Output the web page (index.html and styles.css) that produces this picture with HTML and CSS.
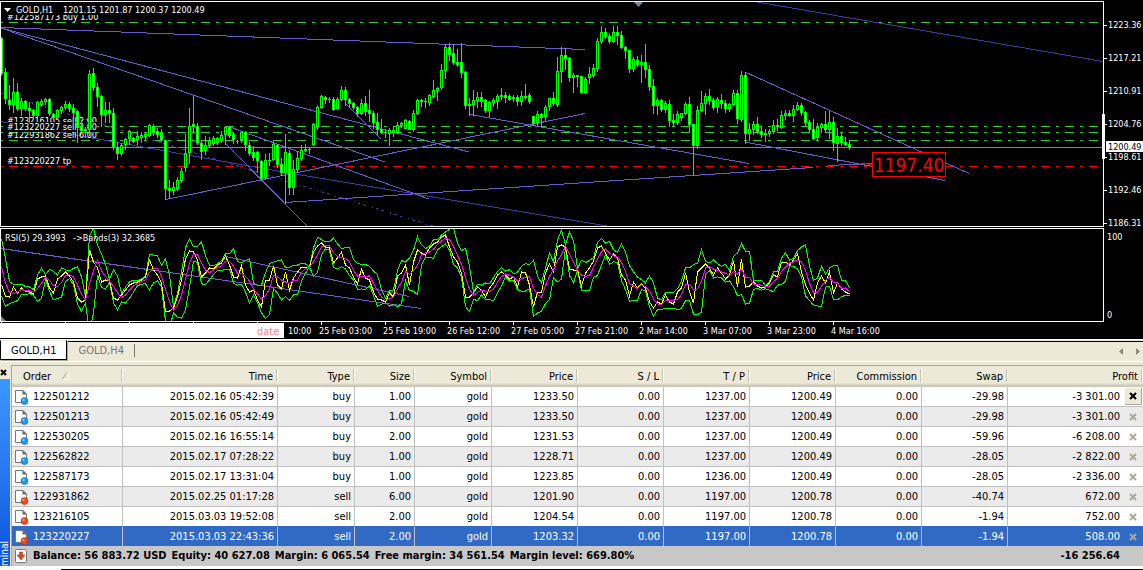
FILE: index.html
```
<!DOCTYPE html>
<html lang="en">
<head>
  <meta charset="UTF-8">
  <title>GOLD,H1</title>
  <link rel="stylesheet" href="styles.css">
</head>
<body>
  <svg class="chart" viewBox="0 0 1143 339" role="img" aria-label="GOLD,H1 chart">
    <defs>
      <clipPath id="pricePane"><rect x="1" y="2" width="1102" height="224"/></clipPath>
      <clipPath id="rsiPane"><rect x="1" y="229" width="1102" height="92"/></clipPath>
    </defs>

    <!-- order levels -->
    <g class="levels">
      <path class="level" d="M1 22.5H1103M1 126.5H1103M1 132.5H1103M1 140.5H1103"/>
      <path class="level tp" d="M1 166.5H1103"/>
    </g>
    <path class="bid" d="M1 147.5H1103"/>

    <!-- trend lines -->
    <g class="trend" clip-path="url(#pricePane)">
      <path class="dark" d="M0 121.5L280 171.5L613 227M757 2L1103 61.5"/>
      <path class="dark dots" d="M0 93L436 227"/>
      <path d="M1 27.5L585 49.5M1 28L469 152M1 28L385 162M230 127L429 199"/>
      <path d="M226 144L308 227M345 103L381 139"/>
      <path d="M166 199.5L585 113.5M285 202.5L813 167.5M828 165.5L872 163.5"/>
      <path d="M470 114.5L749 163.5M745 72L969 173.5M745 142L945 180.5"/>
    </g>

    <g class="label">
      <text x="7" y="20">#122587173 buy 1.00</text>
      <rect class="cover" x="1" y="2" width="220" height="13"/>
      <text x="7" y="124">#123216105 sell 2.00</text>
      <text x="7" y="138">#122931862 sell 6.00</text>
      <rect class="cover" x="7" y="122" width="90" height="10"/>
      <text x="7" y="130">#123220227 sell 2.00</text>
      <text x="7" y="164">#123220227 tp</text>
      <path d="M4 8H11L7.500 12Z"/>
      <text x="16" y="13">GOLD,H1</text>
      <text x="63" y="13">1201.15 1201.87 1200.37 1200.49</text>
    </g>

    <g id="candles" clip-path="url(#pricePane)"></g>
    <path class="shift" d="M634 2H643L638.500 7Z"/>

    <path class="pointer" d="M862 163L872 165"/>
    <rect class="price-box" x="872.500" y="152.500" width="73" height="24"/>
    <text class="price-text" x="909" y="172">1197.40</text>

    <!-- RSI pane -->
    <g class="trend" clip-path="url(#rsiPane)">
      <path d="M1 248.500L421 308.500M226 256.500L409 296.500"/>
    </g>
    <g class="rsi" clip-path="url(#rsiPane)">
      <polyline id="upper" class="band"/>
      <polyline id="lower" class="band"/>
      <polyline id="rsi" class="value"/>
      <polyline id="middle" class="middle"/>
    </g>
    <path class="shift" d="M1 316V321H6Z"/>
    <g class="label">
      <text x="5" y="241">RSI(5) 29.3993</text>
      <text x="73" y="241">-&gt;Bands(3) 32.3685</text>
    </g>

    <!-- frames and axes -->
    <path class="frame" d="M0.500 1.500H1103.500V226.500H0.500ZM0.500 228.500H1103.500V321.500H0.500Z"/>
    <rect class="range" x="1102" y="114" width="3" height="45"/>
    <rect class="range" x="1106" y="141" width="37" height="11"/>
    <path id="ticks" class="frame"/>
    <g id="prices" class="label"></g>
    <text class="label current" x="1108" y="150">1200.49</text>
    <g class="label">
      <text x="1107" y="240">100</text>
      <text x="1107" y="318">0</text>
    </g>
    <g id="times" class="label"></g>
    <rect class="range" x="0" y="323" width="284" height="15"/>
    <text class="date" x="257" y="335">date</text>
  </svg>

  <nav class="tabs">
    <a class="tab active" href="#h1">GOLD,H1</a>
    <a class="tab" href="#h4">GOLD,H4</a>
    <span class="tab-end"></span>
    <button class="scroll" aria-label="Scroll left"><svg width="4" height="7"><path d="M4 0V7L0 3.500Z"/></svg></button>
    <button class="scroll" aria-label="Scroll right"><svg width="4" height="7"><path d="M0 0V7L4 3.500Z"/></svg></button>
  </nav>

  <div class="terminal">
    <div class="side">
      <button class="close" aria-label="Close">
        <svg width="7" height="7" viewBox="0 0 7 7"><path d="M1 1L6 6M6 1L1 6"/></svg>
      </button>
      <div class="caption">minal</div>
    </div>
    <table>
      <colgroup>
        <col class="w-order"><col class="w-time"><col class="w-type"><col class="w-size"><col class="w-symbol">
        <col class="w-num"><col class="w-num"><col class="w-num"><col class="w-num"><col class="w-num"><col class="w-num">
        <col><col class="w-close">
      </colgroup>
      <thead>
        <tr>
          <th class="order">Order <svg class="sort" width="9" height="8" viewBox="0 0 9 8"><path class="lo" d="M0 7.500H8L5 1"/><path class="hi" d="M0.500 7.500L4.500 0.500"/></svg></th>
          <th>Time</th>
          <th>Type</th>
          <th>Size</th>
          <th>Symbol</th>
          <th>Price</th>
          <th>S / L</th>
          <th>T / P</th>
          <th>Price</th>
          <th>Commission</th>
          <th>Swap</th>
          <th colspan="2">Profit</th>
        </tr>
      </thead>
      <tbody id="orders"></tbody>
      <tfoot>
        <tr>
          <td colspan="11" class="order">
            <svg class="doc" width="14" height="16" viewBox="0 0 14 16">
              <rect x="1.500" y="1.500" width="11" height="13" rx="1" fill="#fff" stroke="#777"/>
              <path d="M5.500 4H8.500V7H11L7 12L3 7H5.500Z" fill="#e04818" stroke="#a03010" stroke-width="0.500"/>
            </svg><span class="balance"><span>Balance: 56 883.72 USD</span> <span>Equity: 40 627.08</span> <span>Margin: 6 065.54</span> <span>Free margin: 34 561.54</span> <span>Margin level: 669.80%</span></span>
          </td>
          <td>-16 256.64</td>
          <td></td>
        </tr>
      </tfoot>
    </table>
  </div>
  <div class="bottom-edge"></div>

  <script src="chart.js"></script>
</body>
</html>
```

FILE: styles.css
```
* {
  box-sizing: border-box;
}

body {
  margin: 0;
  background-color: #ece9d8;
  color: #000;
  font-family: "DejaVu Sans Condensed", "DejaVu Sans", Tahoma, sans-serif;
  font-size: 11px;
  display: flex;
  flex-direction: column;
  min-height: 100vh;
}

button {
  border: none;
  background: none;
  padding: 0;
  line-height: 0;
}

/* chart */
.chart {
  display: block;
  width: 100%;
  height: auto;
  background-color: #000;
}

.level {
  stroke: #32cd32;
  stroke-dasharray: 9 6 3 6;
  stroke-dashoffset: 16;
  shape-rendering: crispEdges;
}

.level.tp {
  stroke: #ff0000;
}

.bid {
  stroke: #778899;
  shape-rendering: crispEdges;
}

.trend path {
  fill: none;
  stroke: #6a5acd;
  shape-rendering: crispEdges;
}

.trend .dark {
  stroke: #4334a8;
}

.trend .dots {
  stroke-dasharray: 3 6 1 3 3 3;
}

.label {
  fill: #fff;
  font-size: 9px;
}

.label.current {
  fill: #000;
}

.cover {
  fill: #000;
}

.up, .down {
  stroke: #00ff00;
  shape-rendering: crispEdges;
}

.up {
  fill: #000;
}

.down {
  fill: #fff;
}

.shift {
  fill: #778899;
}

.pointer {
  stroke: #ff0000;
}

.price-box {
  fill: #000;
  stroke: #ff0000;
}

.price-text {
  fill: #ff0000;
  font-size: 19px;
  text-anchor: middle;
}

.rsi polyline {
  fill: none;
  shape-rendering: crispEdges;
}

.rsi .band {
  stroke: #00ff00;
}

.rsi .value {
  stroke: #ffff00;
}

.rsi .middle {
  stroke: #ff00ff;
}

.frame {
  fill: none;
  stroke: #fff;
  shape-rendering: crispEdges;
}

.range {
  fill: #fff;
}

.date {
  fill: #ff8080;
  font-size: 11px;
}

/* chart tabs */
.tabs {
  display: flex;
  align-items: flex-start;
  height: 23px;
  border-top: 1px solid #fff;
  border-bottom: 1px solid #fff;
  box-shadow: inset 0 1px #ece9d8, inset 0 2px #000;
}

.tab {
  height: 20px;
  padding: 1px 10px 0 11px;
  line-height: 19px;
  color: #77756a;
  text-decoration: none;
}

.tab.active {
  background-color: #fff;
  color: #000;
  border: 1px solid #000;
  border-top-color: #ece9d8;
  box-shadow: 1px 1px #aca899;
  padding: 0 10px;
}

.tab-end {
  width: 1px;
  height: 13px;
  margin: 4px auto 0 0;
  background-color: #77756a;
}

.scroll {
  margin: 8px 3px 0 10px;
  fill: #8c8a80;
}

/* terminal */
.terminal {
  display: flex;
  margin-top: 3px;
}

.side {
  flex: none;
  width: 11px;
  display: flex;
  flex-direction: column;
}

.close {
  height: 14px;
  padding-right: 4px;
}

.close path {
  stroke: #000;
  stroke-width: 2;
}

.caption {
  flex: 1;
  width: 10px;
  background: linear-gradient(#0c50e0, #2878f0 50%, #3c96ff);
  color: #fff;
  font-size: 10px;
  line-height: 10px;
  writing-mode: vertical-rl;
  transform: rotate(180deg);
}

table {
  flex: 1;
  width: 100%;
  min-width: 0;
  table-layout: fixed;
  border-collapse: separate;
  border-spacing: 0;
  border-top: 1px solid #aca899;
  border-left: 1px solid #aca899;
  background-color: #fff;
}

.w-order { width: 111px; }
.w-time { width: 155px; }
.w-type { width: 77px; }
.w-size { width: 60px; }
.w-symbol { width: 77px; }
.w-num { width: 86px; }
.w-close { width: 20px; }

th, td {
  padding: 0 3px 0 0;
  text-align: right;
  white-space: nowrap;
  line-height: 16px;
}

th {
  height: 21px;
  padding-right: 5px;
  font-weight: normal;
  background: linear-gradient(#fff, #fff) right 3px / 1px 13px no-repeat,
    linear-gradient(#c5c2b0, #c5c2b0) right 1px top 3px / 1px 13px no-repeat,
    linear-gradient(#ece9d8 17px, #dedac8 18px, #cbc7b8 20px, #c5c2b8);
}

td {
  height: 20px;
  border-right: 1px solid #c0c0c0;
  border-bottom: 1px solid #c0c0c0;
}

tbody tr:nth-child(even) {
  background-color: #ebebeb;
}

tbody td:nth-last-child(-n+2) {
  border-right: none;
}

tbody tr.selected {
  background-color: #316ac5;
  color: #fff;
}

tr:has(+ .selected) td {
  border-bottom-color: #316ac5;
}

.selected td {
  height: 19px;
  border-bottom: none;
}

th.order {
  padding-left: 11px;
}

.order {
  text-align: left;
}

td.order {
  padding-left: 2px;
}

.sort {
  margin-left: 8px;
  fill: none;
}

.sort .lo {
  stroke: #fff;
}

.sort .hi {
  stroke: #aca899;
}

.doc {
  margin-right: 5px;
  vertical-align: middle;
}

tfoot td {
  background-color: #c8c8c8;
  border: none;
  font-weight: bold;
}

.balance {
  display: inline-flex;
  gap: 5px;
}

td.action {
  padding: 0 0 0 2px;
}

.delete {
  display: block;
  width: 17px;
  height: 17px;
  stroke: #aca899;
  stroke-width: 2;
}

tr:first-child .delete {
  background-color: #ece9d8;
  border-right: 1px solid #aca899;
  border-bottom: 1px solid #aca899;
  stroke: #000;
}

.bottom-edge {
  height: 4px;
  background: linear-gradient(#000, #000) 61px 3px / 100% 1px no-repeat #fff;
  background-position: left 61px top 3px;
}
```

FILE: chart.js
```
const STEP = 4;

// high, body top, body bottom, low (pane pixels), d = bearish
const candles = `
37 38 73 75 d|68 72 98 103 d|85 100 104 109 d|78 92 104 112|83 92 108 110 d|98 101 108 115|100 101 108 110 d|102 108 110 122 d
109 110 115 117 d|101 102 115 116|99 101 104 106|98 99 101 104|98 99 113 115 d|113 114 117 119 d|109 110 117 119|106 107 110 113
101 104 107 109|102 104 108 111 d|104 108 112 122 d|110 111 127 142 d|120 126 130 132 d|127 129 130 137 d|70 74 129 135|68 73 87 90 d
83 87 96 106 d|95 96 114 126 d|102 110 114 122|102 110 113 122 d|108 113 146 149 d|142 147 153 159 d|143 145 153 155|138 139 144 149
130 131 138 144|137 138 141 142 d|131 136 139 144|132 135 137 142|132 134 136 140|124 125 135 136|124 126 132 135 d|128 131 134 137 d
129 132 139 141 d|140 140 188 199 d|180 188 190 198 d|182 187 190 194|177 180 188 190|168 171 180 182|134 153 167 171|108 126 152 163
95 124 126 132 d|123 126 142 144 d|141 143 151 159 d|136 145 150 154|137 140 145 147|136 138 143 145|137 138 142 144|131 135 140 142
126 127 134 144|126 127 135 137 d|133 134 139 143 d|140 141 141 143|131 132 139 142|131 132 144 150 d|142 145 153 155 d|146 152 157 160 d
151 152 160 172 d|160 161 178 180 d|154 160 177 179|153 160 160 165|140 144 159 160|144 145 164 167 d|158 164 172 175 d|134 152 172 203
150 153 187 194 d|160 169 187 194|151 158 169 172|145 150 158 160|144 149 150 151|148 149 149 153|123 124 144 145|105 107 126 129
95 96 107 108|96 97 99 103 d|97 99 99 102|97 99 109 110 d|97 99 108 109|86 90 99 100|87 90 99 105 d|98 99 103 107 d
102 103 107 109 d|106 107 113 116 d|99 103 113 114|96 103 111 115 d|90 110 113 121 d|111 113 122 128 d|113 122 129 135 d|119 129 132 133 d
129 132 132 137|128 130 133 145|126 130 132 136|122 125 132 133|122 123 125 127|119 120 128 128|120 121 129 129 d|110 113 129 131
99 100 113 114|99 100 101 106 d|98 101 101 107|94 95 102 105|80 90 96 97|87 88 90 100|64 70 87 89|44 47 70 78
43 47 54 60 d|44 53 62 64 d|49 62 64 66 d|43 62 72 77 d|71 72 105 108 d|98 104 105 115|90 100 104 115|92 97 100 107
92 97 101 106 d|99 100 110 112 d|101 102 110 116|98 100 102 106|94 96 101 108|88 95 96 99|92 95 97 102 d|94 96 99 100 d
95 97 98 101|95 97 101 105 d|91 96 101 105|84 96 97 99|93 95 101 103 d|116 116 123 125 d|111 114 122 125|113 114 117 125 d
105 107 116 120|98 98 106 110|92 98 103 105 d|57 71 104 106|47 55 71 82|48 55 58 69 d|57 58 77 81 d|73 75 77 92
75 75 76 86|76 76 92 93 d|77 79 92 93|67 74 77 83|64 68 75 77|38 41 68 71|26 32 41 43|28 32 36 38 d
34 36 41 43 d|26 32 41 42|26 32 35 44 d|31 35 47 48 d|46 47 50 58 d|50 50 68 72 d|57 59 68 71|56 60 64 66 d
55 62 64 82|44 62 69 77 d|65 69 86 90 d|79 86 105 113 d|98 100 105 114|99 100 109 111 d|101 103 109 112|100 104 120 126 d
114 120 122 126 d|111 114 122 124|113 113 117 120|102 104 113 114|97 104 124 132 d|124 124 145 175 d|106 110 145 148|91 103 110 111
93 96 103 114|89 96 100 104 d|98 100 107 109 d|97 99 106 112|94 100 103 108 d|100 103 108 112 d|103 104 108 111|90 93 104 105
90 93 118 123 d|71 75 119 121|72 75 133 143 d|123 129 133 140|121 124 129 134|117 124 131 133 d|126 131 134 137 d|129 133 134 141
129 131 133 136|120 125 131 133|119 125 126 130|111 115 127 128|110 113 115 119|110 113 115 116 d|105 109 115 121|102 105 109 110
103 105 112 115 d|111 112 122 125 d|120 122 129 132 d|119 129 138 139 d|123 127 137 140|123 124 127 132|111 124 129 132 d|111 122 129 138
117 122 142 150 d|128 136 143 161|132 136 142 145 d|137 142 144 145 d|140 144 147 149 d`;

const svgCandles = candles.trim().split(/[|\n]/).map((line, i) => {
  const [high, top, bottom, low, dir] = line.split(' ');
  const x = 1.5 + i * STEP;
  return `<path class="${dir ? 'down' : 'up'}" d="M${x} ${high}V${+low + 1}"/>
    <rect class="${dir ? 'down' : 'up'}" x="${x - 1}" y="${+top + 0.5}" width="2" height="${bottom - top || 0.01}"/>`;
});
document.getElementById('candles').innerHTML = svgCandles.join('');

// the first two values lie left of the pane and only feed the bands
const rsi = [
  250, 267, 285, 296, 297, 287, 293, 288, 291, 292, 294, 279, 277, 276, 288, 293, 279, 276, 272, 276, 282, 298, 302, 300,
  250, 262, 268, 282, 280, 281, 298, 300, 295, 290, 285, 283, 282, 280, 277, 260, 270, 275, 283, 311, 311, 308, 297, 280,
  259, 251, 252, 260, 277, 273, 268, 269, 265, 263, 256, 265, 277, 278, 266, 285, 292, 290, 300, 307, 280, 280, 266, 285,
  289, 272, 290, 278, 272, 267, 267, 267, 252, 246, 243, 247, 248, 263, 258, 252, 265, 268, 277, 284, 269, 278, 280, 292,
  299, 300, 302, 293, 297, 276, 273, 265, 285, 262, 250, 253, 255, 248, 244, 242, 237, 235, 247, 257, 262, 273, 297, 297,
  293, 287, 290, 297, 288, 283, 275, 272, 275, 279, 277, 287, 272, 273, 285, 307, 292, 292, 273, 264, 272, 247, 245, 247,
  269, 270, 270, 286, 273, 268, 261, 248, 246, 253, 260, 254, 258, 275, 280, 296, 282, 288, 284, 288, 302, 308, 302, 304,
  295, 302, 304, 292, 288, 273, 292, 303, 272, 268, 264, 268, 275, 268, 273, 279, 275, 261, 287, 259, 287, 286, 282, 286,
  288, 287, 283, 275, 277, 262, 262, 265, 260, 254, 272, 285, 293, 300, 283, 276, 283, 272, 293, 283, 289, 292, 294
];

const lines = { rsi: [], middle: [], upper: [], lower: [] };
for (let i = 2; i < rsi.length; i++) {
  const x = 1.5 + (i - 2) * STEP;
  const last = rsi.slice(i - 2, i + 1);
  const mean = last.reduce((a, b) => a + b) / 3;
  const dev = Math.sqrt(last.reduce((a, b) => a + (b - mean) ** 2, 0) / 3);
  lines.rsi.push(`${x},${rsi[i]}`);
  lines.middle.push(`${x},${mean}`);
  lines.upper.push(`${x},${mean - 2 * dev}`);
  lines.lower.push(`${x},${mean + 2 * dev}`);
}
for (const id in lines) {
  document.getElementById(id).setAttribute('points', lines[id].join(' '));
}

// axes
const prices = ['1223.36', '1217.21', '1210.91', '1204.76', '1198.61', '1192.46', '1186.31'];
const times = ['25 Feb 03:00', '25 Feb 19:00', '26 Feb 12:00', '27 Feb 05:00', '27 Feb 21:00',
  '2 Mar 14:00', '3 Mar 07:00', '3 Mar 23:00', '4 Mar 16:00'];
let ticks = '';
prices.forEach((p, i) => ticks += `M1104 ${25.5 + i * 33}h3`);
for (let x = 1.5; x < 850; x += 64) ticks += `M${x} 322v3`;
document.getElementById('ticks').setAttribute('d', ticks);
document.getElementById('prices').innerHTML =
  prices.map((p, i) => `<text x="1108" y="${28 + i * 33}">${p}</text>`).join('');
document.getElementById('times').innerHTML = '<text x="288" y="334">10:00</text>' +
  times.map((t, i) => `<text x="${319 + i * 64}" y="334">${t}</text>`).join('');

// open orders
const orders = [
  ['122501212', '2015.02.16 05:42:39', 'buy', '1.00', '1233.50', '1237.00', '1200.49', '-29.98', '-3 301.00'],
  ['122501213', '2015.02.16 05:42:49', 'buy', '1.00', '1233.50', '1237.00', '1200.49', '-29.98', '-3 301.00'],
  ['122530205', '2015.02.16 16:55:14', 'buy', '2.00', '1231.53', '1237.00', '1200.49', '-59.96', '-6 208.00'],
  ['122562822', '2015.02.17 07:28:22', 'buy', '1.00', '1228.71', '1237.00', '1200.49', '-28.05', '-2 822.00'],
  ['122587173', '2015.02.17 13:31:04', 'buy', '1.00', '1223.85', '1236.00', '1200.49', '-28.05', '-2 336.00'],
  ['122931862', '2015.02.25 01:17:28', 'sell', '6.00', '1201.90', '1197.00', '1200.78', '-40.74', '672.00'],
  ['123216105', '2015.03.03 19:52:08', 'sell', '2.00', '1204.54', '1197.00', '1200.78', '-1.94', '752.00'],
  ['123220227', '2015.03.03 22:43:36', 'sell', '2.00', '1203.32', '1197.00', '1200.78', '-1.94', '508.00']
];

document.getElementById('orders').innerHTML = orders.map(([id, time, type, size, open, tp, price, swap, profit], i) => {
  const [fill, edge] = type === 'buy' ? ['#1e9af0', '#0a5ca8'] : ['#f04a1c', '#a82c08'];
  return `
  <tr class="${i === orders.length - 1 ? 'selected' : ''}">
    <td class="order"><svg class="doc" width="14" height="16" viewBox="0 0 14 16">
      <path d="M1.5 1.500H9L12.500 5V13.500H1.500Z" fill="#fff" stroke="#777"/>
      <path d="M8.500 1L8.500 5.500H13Z" fill="#666"/>
      <circle cx="10.500" cy="12" r="3.500" fill="${fill}" stroke="${edge}" stroke-width="0.500"/>
      <circle cx="9.500" cy="11" r="1" fill="#fff" opacity="0.600"/>
    </svg>${id}</td>
    <td>${time}</td>
    <td>${type}</td>
    <td>${size}</td>
    <td>gold</td>
    <td>${open}</td>
    <td>0.00</td>
    <td>${tp}</td>
    <td>${price}</td>
    <td>0.00</td>
    <td>${swap}</td>
    <td>${profit}</td>
    <td class="action"><button class="delete" aria-label="Close order ${id}"><svg width="8" height="8" viewBox="0 0 8 8"><path d="M1 1L7 7M7 1L1 7"/></svg></button></td>
  </tr>`;
}).join('');
```
